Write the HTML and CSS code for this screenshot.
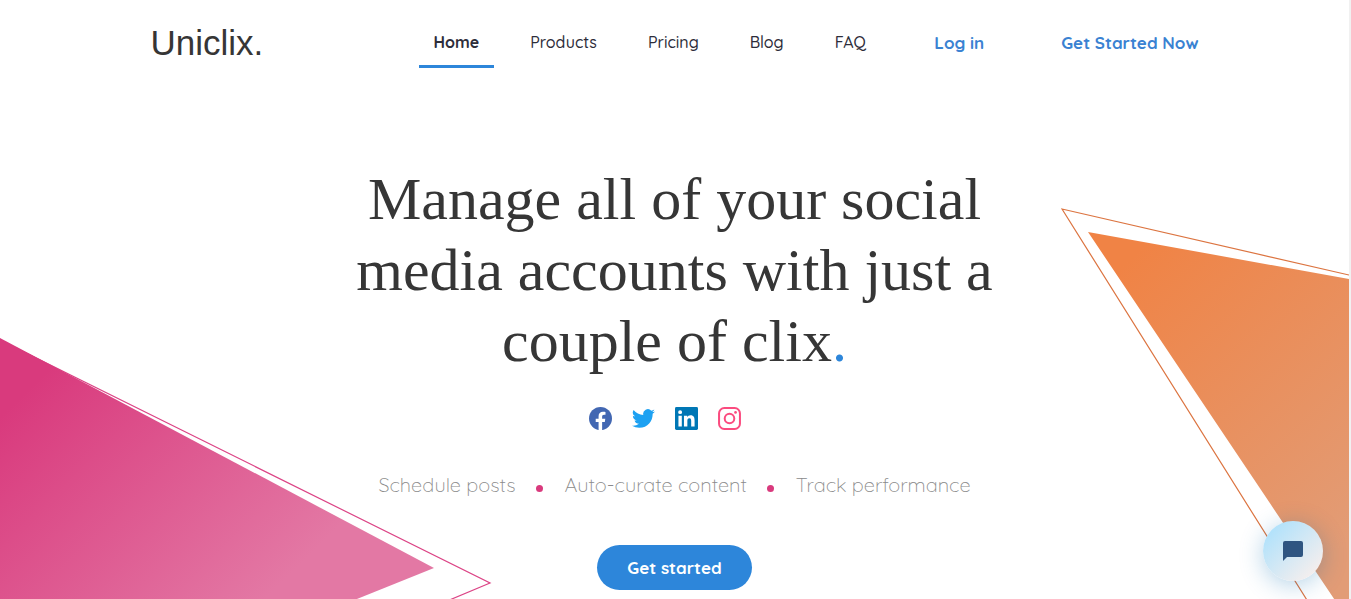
FILE: index.html
```html
<!DOCTYPE html>
<html lang="en">
<head>
<meta charset="utf-8">
<meta name="viewport" content="width=device-width, initial-scale=1">
<title>Uniclix</title>
<link rel="stylesheet" href="styles.css">
</head>
<body>
<div class="page">
  <svg class="shape shape-pink" width="492" height="300" viewBox="0 0 492 300" aria-hidden="true">
    <defs><linearGradient id="pink" gradientUnits="userSpaceOnUse" x1="30" y1="50" x2="250" y2="275"><stop offset="0" stop-color="#d93a7d"/><stop offset="1" stop-color="#e378a4"/></linearGradient></defs>
    <path d="M0 2 490 245 359 300" fill="none" stroke="#dc4486" stroke-width="1.200"/>
    <path d="M0 0 434 230 260 300H0Z" fill="url(#pink)"/>
  </svg>
  <svg class="shape shape-orange" width="288" height="440" viewBox="0 0 288 440" aria-hidden="true">
    <defs><linearGradient id="orange" gradientUnits="userSpaceOnUse" x1="60" y1="60" x2="300" y2="320"><stop offset="0" stop-color="#f08345"/><stop offset="1" stop-color="#e29c76"/></linearGradient></defs>
    <path d="M27 24 288 71V440H306Z" fill="url(#orange)"/>
    <path d="M288 67 1 1 276 440" fill="none" stroke="#dc7440" stroke-width="1.200"/>
  </svg>

  <header class="header">
    <a class="logo" href="#">Uniclix.</a>
    <nav class="nav">
      <a class="nav-link active" href="#">Home</a>
      <a class="nav-link" href="#">Products</a>
      <a class="nav-link" href="#">Pricing</a>
      <a class="nav-link" href="#">Blog</a>
      <a class="nav-link" href="#">FAQ</a>
    </nav>
    <div class="account">
      <a class="account-link" href="#">Log in</a>
      <a class="account-link" href="#">Get Started Now</a>
    </div>
  </header>

  <main class="hero">
    <h1 class="title">Manage all of your social media accounts with just a couple of clix<span class="title-dot">.</span></h1>
    <div class="socials">
      <svg width="23" height="23" viewBox="0 0 24 24" role="img" aria-label="Facebook"><circle cx="12" cy="12" r="12" fill="#4267b2"/><path d="M10 24v-8.300H7v-3.500h3V9.600c0-3 1.800-4.700 4.500-4.700 1.300 0 2.700.2 2.700.2v3h-1.500c-1.500 0-2 .9-2 1.900v2.200h3.300l-.5 3.500h-2.800V24z" fill="#fff"/></svg>
      <svg width="23" height="23" viewBox="0 0 24 24" role="img" aria-label="Twitter"><path fill="#1da1f2" d="M23.950 4.570a10 10 0 0 1-2.820.77 4.960 4.960 0 0 0 2.160-2.720c-.95.550-2 .960-3.130 1.180a4.920 4.920 0 0 0-8.380 4.480A13.930 13.930 0 0 1 1.640 3.160a4.920 4.920 0 0 0 1.520 6.570 4.900 4.900 0 0 1-2.230-.61v.06a4.920 4.920 0 0 0 3.950 4.830 5 5 0 0 1-2.210.08 4.940 4.940 0 0 0 4.600 3.420A9.870 9.870 0 0 1 0 19.540a14 14 0 0 0 7.550 2.210c9.050 0 14-7.500 14-13.980 0-.21 0-.42-.02-.63a9.940 9.940 0 0 0 2.460-2.550z"/></svg>
      <svg width="23" height="23" viewBox="0 0 24 24" role="img" aria-label="LinkedIn"><rect width="24" height="24" rx="1.500" fill="#0077b5"/><path fill="#fff" d="M3.600 9h3.500v11.400H3.600zM5.350 3.300a2.060 2.060 0 1 1 0 4.120 2.060 2.060 0 0 1 0-4.120zM9.350 9h3.400v1.560h.05c.48-.9 1.640-1.850 3.370-1.850 3.600 0 4.270 2.370 4.270 5.460v6.230h-3.550v-5.520c0-1.320-.03-3.020-1.850-3.020-1.850 0-2.140 1.450-2.140 2.930v5.610H9.350z"/></svg>
      <svg width="23" height="23" viewBox="0 0 24 24" role="img" aria-label="Instagram"><g fill="none" stroke="#fb4b7f" stroke-width="2.100"><rect x="1.100" y="1.100" width="21.800" height="21.800" rx="5.500"/><circle cx="12" cy="12" r="5"/></g><circle cx="18.300" cy="5.700" r="1.400" fill="#fb4b7f"/></svg>
    </div>
    <ul class="features">
      <li>Schedule posts</li>
      <li>Auto-curate content</li>
      <li>Track performance</li>
    </ul>
    <button class="cta" type="button">Get started</button>
  </main>

  <button class="chat" type="button" aria-label="Open chat">
    <svg width="20" height="20" viewBox="0 0 20 20" aria-hidden="true"><path d="M2 0H18Q20 0 20 2V14Q20 16 18 16H4L0 20V2Q0 0 2 0Z" fill="#2f5581"/></svg>
  </button>
</div>
</body>
</html>
```
FILE: styles.css
```css
* { box-sizing: border-box; }

body {
  margin: 0;
  background: #fff;
  color: #363636;
  font-family: Quicksand, Lato, sans-serif;
}

a { color: inherit; text-decoration: none; }

.page {
  position: relative;
  min-height: 100vh;
  overflow: hidden;
  border-right: 2px solid #f1f1f1;
}

.shape { position: absolute; }
.shape-pink { left: 0; top: 338px; }
.shape-orange { right: 0; top: 208px; }

.header {
  position: relative;
  display: grid;
  grid-template-columns: 268px 1fr auto;
  max-width: 1048px;
  margin: 0 auto;
  padding-top: 18px;
}

.logo {
  font-family: "Liberation Sans", Arial, sans-serif;
  font-size: 35px;
  line-height: 50px;
}

.nav { display: flex; gap: 21px; }

.nav-link {
  height: 50px;
  padding: 0 15px;
  border-bottom: 3px solid transparent;
  color: #2d2d3a;
  font-size: 16px;
  font-weight: 500;
  line-height: 48px;
}

.active {
  border-color: #2d86da;
  font-weight: 700;
}

.account {
  display: flex;
  gap: 77px;
  color: #3a82d2;
  font-size: 17px;
  font-weight: 700;
  line-height: 50px;
}

.hero {
  position: relative;
  display: flex;
  flex-direction: column;
  align-items: center;
  padding: 96px 20px 9px;
}

.title {
  max-width: 700px;
  margin: 0;
  font-family: "Liberation Serif", "Times New Roman", serif;
  font-size: 60px;
  font-weight: 400;
  line-height: 71px;
  text-align: center;
}

.title-dot { color: #2d86da; }

.socials {
  display: flex;
  gap: 20px;
  margin: 30px 20px 0 0;
}

.features {
  display: flex;
  margin: 40px 0 0;
  padding: 0;
  color: #8a8a8a;
  font-size: 20px;
  font-weight: 300;
  line-height: 30px;
  list-style: none;
}

.features li { display: flex; align-items: center; }

.features li + li::before {
  content: "";
  width: 7px;
  height: 7px;
  margin: 7px 22px 0 20px;
  border-radius: 50%;
  background: #d93a7d;
}

.cta {
  height: 45px;
  margin-top: 45px;
  padding: 0 30px;
  border: 0;
  border-radius: 23px;
  background: #2d86da;
  color: #fff;
  font: 700 17px Quicksand, Lato, sans-serif;
}

.chat {
  position: fixed;
  right: 28px;
  bottom: 18px;
  display: grid;
  place-items: center;
  width: 60px;
  height: 60px;
  padding: 0;
  border: 0;
  border-radius: 50%;
  background: linear-gradient(135deg, #b2e2fb 15%, #f3eeee 85%);
  box-shadow: 0 4px 24px rgba(2, 107, 175, 0.3);
}
```
